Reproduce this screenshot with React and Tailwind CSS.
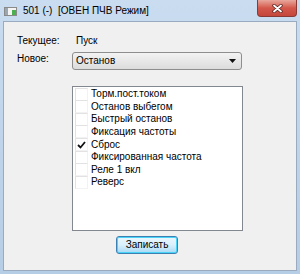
import React from 'react';

const items = [
  { label: 'Торм.пост.током', checked: false },
  { label: 'Останов выбегом', checked: false },
  { label: 'Быстрый останов', checked: false },
  { label: 'Фиксация частоты', checked: false },
  { label: 'Сброс', checked: true },
  { label: 'Фиксированная частота', checked: false },
  { label: 'Реле 1 вкл', checked: false },
  { label: 'Реверс', checked: false },
];

const font = { fontFamily: '"Liberation Sans", Arial, sans-serif' };

const WindowIcon = () => (
  <svg width="13" height="9" viewBox="0 0 13 9" className="shrink-0">
    <rect x="0.5" y="0.5" width="12" height="8" fill="#f4f4f4" stroke="#8a8a8a" />
    <rect x="1" y="1" width="3" height="7" fill="#9aa6b2" />
    <rect x="8" y="3" width="4" height="5" fill="#4caf50" />
  </svg>
);

const CheckBox = ({ checked }) => (
  <div className="w-[13px] h-[13px] shrink-0 flex items-center justify-center border-l border-t border-[#e2e2e2] border-r border-b border-r-[#f2f2f2] border-b-[#f2f2f2]">
    {checked && (
      <svg width="9" height="8" viewBox="0 0 9 8">
        <path d="M1 4 L3.5 6.5 L8 1" fill="none" stroke="#111" strokeWidth="1.8" />
      </svg>
    )}
  </div>
);

export default function App() {
  return (
    <div
      className="w-[300px] h-[274px] flex flex-col bg-gradient-to-b from-[#c9dcf0] to-[#b6cde6] overflow-hidden"
      style={font}
    >
      {/* Title bar */}
      <div className="h-[21px] flex items-start shrink-0">
        <div className="flex items-center gap-[6px] pl-[4px] pt-[4px]">
          <WindowIcon />
          <span className="text-[10px] leading-[14px] text-black whitespace-pre">501 (-)  [ОВЕН ПЧВ Режим]</span>
        </div>
        <div className="ml-auto mr-[3px] w-[40px] h-[17px] rounded-b-[4px] border border-t-0 border-[#8a3a34] bg-gradient-to-b from-[#e8a79d] via-[#d3574b] to-[#c5473c] flex items-center justify-center">
          <svg width="11" height="9" viewBox="0 0 11 9">
            <path d="M2 1.5 L9 7.5 M9 1.5 L2 7.5" stroke="#5a2520" strokeWidth="3.4" strokeLinecap="round" />
            <path d="M2 1.5 L9 7.5 M9 1.5 L2 7.5" stroke="#fff" strokeWidth="1.8" strokeLinecap="round" />
          </svg>
        </div>
      </div>

      {/* Client area */}
      <div className="flex-1 mx-[3px] mb-[3px] bg-[#f0f0f0] border border-[#9aabbf] flex flex-col text-[10px] text-black">
        <div className="grid grid-cols-[55px_170px] pl-[13px] pt-[12px] gap-y-[4px]">
          <span className="leading-[14px]">Текущее:</span>
          <span className="leading-[14px] pl-[4px]">Пуск</span>
          <span className="leading-[14px]">Новое:</span>
          <div className="h-[18px] rounded-[3px] border border-[#8e8e8e] bg-gradient-to-b from-[#f3f3f3] to-[#dcdcdc] flex items-center pl-[3px] pr-[5px]">
            <span className="leading-[14px]">Останов</span>
            <svg width="7" height="4" viewBox="0 0 7 4" className="ml-auto">
              <path d="M0 0 H7 L3.5 4 Z" fill="#111" />
            </svg>
          </div>
        </div>

        {/* Check list */}
        <div className="ml-[68px] mt-[16px] w-[171px] h-[145px] bg-white border border-[#828790] pt-[1px] pl-[2px]">
          {items.map((it) => (
            <div key={it.label} className="h-[12.57px] flex items-center gap-[3px]">
              <CheckBox checked={it.checked} />
              <span className="leading-[12px] whitespace-nowrap">{it.label}</span>
            </div>
          ))}
        </div>

        {/* Button */}
        <div className="ml-[112px] mt-[5px] w-[62px] h-[18px] rounded-[3px] border border-[#3c7fb1] shadow-[inset_0_0_0_1px_#48d4f8] bg-gradient-to-b from-[#eaf6fd] via-[#d9f0fc] to-[#a7d9f5] flex items-center justify-center">
          <span className="leading-[12px]">Записать</span>
        </div>
      </div>
    </div>
  );
}
